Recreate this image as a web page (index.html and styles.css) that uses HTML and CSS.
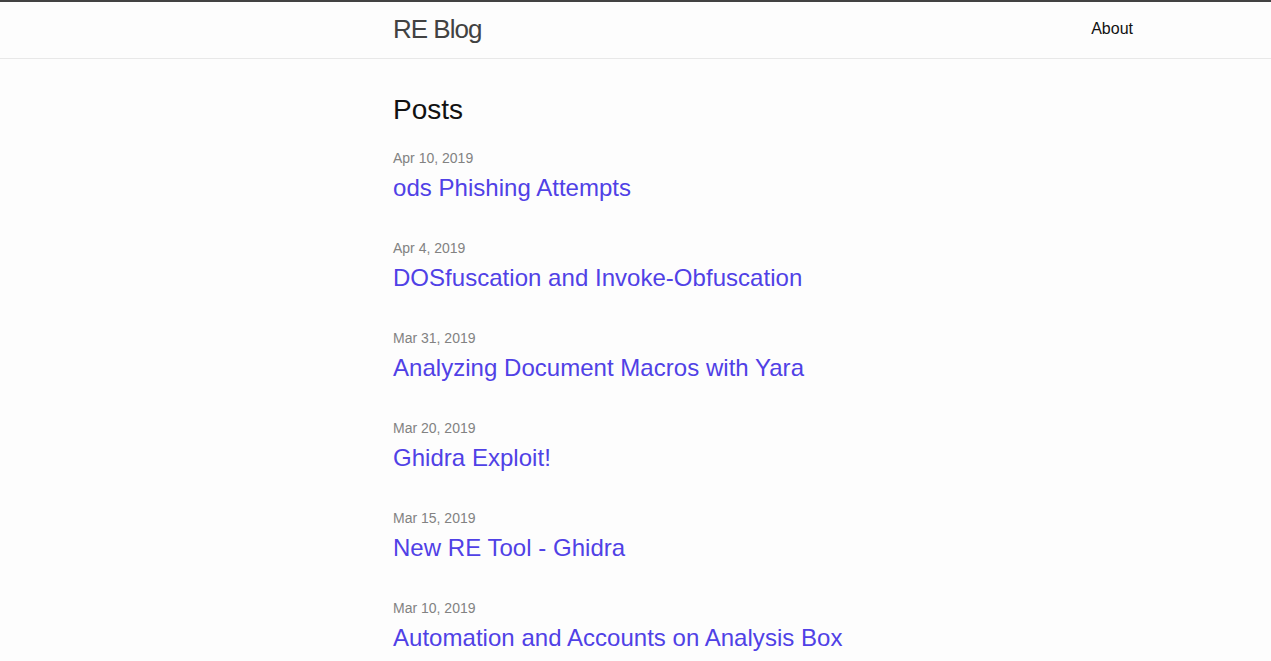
FILE: index.html
```html
<!DOCTYPE html>
<html lang="en">
<head>
<meta charset="utf-8">
<title>RE Blog</title>
<link rel="stylesheet" href="styles.css">
</head>
<body>
<header class="site-header">
  <div class="wrapper header-inner">
    <a class="site-title" href="#">RE Blog</a>
    <nav class="site-nav"><a class="nav-link" href="#">About</a></nav>
  </div>
</header>
<main class="page-content">
  <div class="wrapper">
    <h2 class="post-list-heading">Posts</h2>
    <ul class="post-list">
      <li><span class="post-meta">Apr 10, 2019</span><h3 class="post-title"><a class="post-link" href="#">ods Phishing Attempts</a></h3></li>
      <li><span class="post-meta">Apr 4, 2019</span><h3 class="post-title"><a class="post-link" href="#">DOSfuscation and Invoke-Obfuscation</a></h3></li>
      <li><span class="post-meta">Mar 31, 2019</span><h3 class="post-title"><a class="post-link" href="#">Analyzing Document Macros with Yara</a></h3></li>
      <li><span class="post-meta">Mar 20, 2019</span><h3 class="post-title"><a class="post-link" href="#">Ghidra Exploit!</a></h3></li>
      <li><span class="post-meta">Mar 15, 2019</span><h3 class="post-title"><a class="post-link" href="#">New RE Tool - Ghidra</a></h3></li>
      <li><span class="post-meta">Mar 10, 2019</span><h3 class="post-title"><a class="post-link" href="#">Automation and Accounts on Analysis Box</a></h3></li>
    </ul>
  </div>
</main>
</body>
</html>
```

FILE: styles.css
```css
html, body {
  margin: 0;
  padding: 0;
}
body {
  background: #fdfdfd;
  color: #111111;
  font-family: "Liberation Sans", Arial, Helvetica, sans-serif;
  font-size: 16px;
  line-height: 1.5;
}
.wrapper {
  width: 740px;
  margin-left: 393px;
}
.site-header {
  border-top: 2px solid #424242;
  border-bottom: 1px solid #e8e8e8;
  min-height: 56px;
}
.header-inner {
  display: flex;
  justify-content: space-between;
  align-items: flex-start;
}
.site-title {
  font-size: 26px;
  letter-spacing: -1px;
  line-height: 54px;
  color: #424242;
  text-decoration: none;
}
.site-nav {
  line-height: 54px;
}
.nav-link {
  color: #111111;
  text-decoration: none;
  font-size: 16px;
}
.page-content {
  padding-top: 30px;
}
.post-list-heading {
  font-size: 28px;
  font-weight: 400;
  margin: 0 0 17px;
  line-height: 42px;
}
.post-list {
  list-style: none;
  margin: 0;
  padding: 0;
}
.post-list li {
  margin-bottom: 32px;
}
.post-meta {
  display: block;
  font-size: 14px;
  line-height: 21px;
  color: #828282;
}
.post-title {
  margin: 1px 0 0;
  font-size: 24px;
  font-weight: 400;
  line-height: 36px;
  letter-spacing: 0.03px;
}
.post-link {
  color: #5041e6;
  text-decoration: none;
}
```
